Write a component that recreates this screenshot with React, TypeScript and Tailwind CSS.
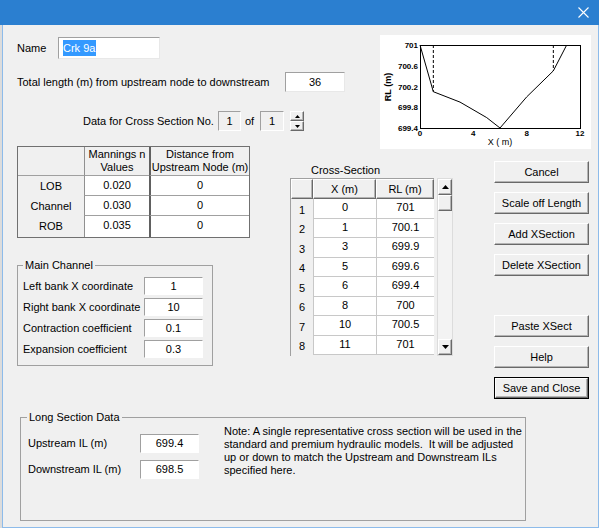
import React from 'react';

const sunken =
  'border border-t-[#a0a0a0] border-l-[#a0a0a0] border-r-[#e8e8e8] border-b-[#e8e8e8]';
const raised =
  'bg-[#f0f0f0] border border-t-white border-l-white border-r-[#696969] border-b-[#696969] shadow-[inset_-1px_-1px_0_#b4b4b4]';

const Btn = ({ label, isDefault = false }: { label: string; isDefault?: boolean }) => (
  <div className={`w-[95px] h-[22px] ${isDefault ? 'border border-black' : ''}`}>
    <div className={`w-full h-full flex items-center justify-center ${raised}`}>{label}</div>
  </div>
);

const Arrow = ({ up }: { up: boolean }) => (
  <svg width="7" height="4" viewBox="0 0 7 4">
    <path d={up ? 'M0 4 L3.5 0 L7 4 Z' : 'M0 0 L3.5 4 L7 0 Z'} fill="#000" />
  </svg>
);

const Chart = () => {
  const px = (x: number) => 420 + (x * 160) / 12;
  const py = (v: number) => 45 + ((701 - v) * 83) / 1.6;
  const pts: [number, number][] = [
    [0, 701], [1, 700.1], [3, 699.9], [5, 699.6], [6, 699.4], [8, 700], [10, 700.5], [11, 701],
  ];
  const d = pts.map(([x, v], i) => `${i ? 'L' : 'M'}${px(x).toFixed(1)} ${py(v).toFixed(1)}`).join(' ');
  const yTicks = ['701', '700.6', '700.2', '699.8', '699.4'];
  const xTicks = [0, 4, 8, 12];
  return (
    <svg width="211" height="114" viewBox="380 35 211 114" className="bg-white block">
      <rect x="420.5" y="45.5" width="160" height="83" fill="none" stroke="#000" />
      <path d={d} fill="none" stroke="#000" strokeWidth="1" />
      <line x1={px(1)} y1="45" x2={px(1)} y2={py(700.1)} stroke="#000" strokeDasharray="3 2" />
      <line x1={px(10)} y1="45" x2={px(10)} y2={py(700.5)} stroke="#000" strokeDasharray="3 2" />
      {yTicks.map((t, i) => (
        <text key={t} x="418" y={48 + i * 20.75} textAnchor="end" fontSize="8" fontWeight="bold" fontFamily="Liberation Sans, Arial, sans-serif" fill="#000">
          {t}
        </text>
      ))}
      {xTicks.map((t) => (
        <text key={t} x={px(t)} y="136" textAnchor="middle" fontSize="8" fontWeight="bold" fontFamily="Liberation Sans, Arial, sans-serif" fill="#000">
          {t}
        </text>
      ))}
      <text x="500" y="145" textAnchor="middle" fontSize="9" fontFamily="Liberation Sans, Arial, sans-serif" fill="#000">
        X ( m)
      </text>
      <text x="0" y="0" transform="translate(391 87) rotate(-90)" textAnchor="middle" fontSize="9" fontWeight="bold" fontFamily="Liberation Sans, Arial, sans-serif" fill="#000">
        RL (m)
      </text>
    </svg>
  );
};

const xs = [
  ['1', '0', '701'],
  ['2', '1', '700.1'],
  ['3', '3', '699.9'],
  ['4', '5', '699.6'],
  ['5', '6', '699.4'],
  ['6', '8', '700'],
  ['7', '10', '700.5'],
  ['8', '11', '701'],
];

export default function App() {
  return (
    <div className="w-[602px] h-[531px] bg-white overflow-hidden flex flex-col font-['Liberation_Sans',Arial,sans-serif] text-[11px] text-black leading-[13px]">
      {/* title bar */}
      <div className="h-[25px] w-[599px] bg-[#2b7fd0] flex items-center justify-end pr-[10px]">
        <svg width="11" height="11" viewBox="0 0 11 11">
          <path d="M0.5 0.5 L10.5 10.5 M10.5 0.5 L0.5 10.5" stroke="#fff" strokeWidth="1.1" />
        </svg>
      </div>

      <div className="flex h-[503px]">
        <div className="w-[2px] bg-[#dcdcdc]" />
        <div className="w-[597px] h-full bg-[#f0f0f0] border-l border-r border-b border-[#8dbbea] flex flex-col">
          {/* top row */}
          <div className="h-[121px] flex">
            <div className="pl-[14px] flex flex-col">
              <div className="mt-[12px] h-[22px] flex items-center">
                <span className="w-[41px]">Name</span>
                <div className={`w-[102px] h-[22px] bg-white ${sunken} border-r-[#d0d0d0] border-b-[#d0d0d0] flex items-center pl-[4px]`}>
                  <span className="bg-[#3399ff] text-white h-[16px] leading-[16px] pr-[1px]">Crk 9a</span>
                </div>
              </div>
              <div className="mt-[13px] h-[20px] flex items-center">
                <span className="w-[268px]">Total length (m) from upstream node to downstream</span>
                <div className={`w-[60px] h-[20px] bg-white ${sunken} flex items-center justify-center`}>36</div>
              </div>
              <div className="mt-[19px] h-[20px] flex items-center pl-[66px]">
                <span className="w-[135px]">Data for Cross Section No.</span>
                <div className={`w-[23px] h-[20px] ${sunken} border-r-white border-b-white flex items-center justify-center`}>1</div>
                <span className="w-[19px] pl-[4px]">of</span>
                <div className={`w-[24px] h-[20px] ${sunken} border-r-white border-b-white flex items-center justify-center`}>1</div>
                <div className="ml-[6px] w-[14px] h-[20px] flex flex-col">
                  <div className={`h-[10px] flex items-center justify-center ${raised}`}>
                    <svg width="5" height="3" viewBox="0 0 5 3"><path d="M0 3 L2.5 0 L5 3 Z" fill="#000" /></svg>
                  </div>
                  <div className={`h-[10px] flex items-center justify-center ${raised}`}>
                    <svg width="5" height="3" viewBox="0 0 5 3"><path d="M0 0 L2.5 3 L5 0 Z" fill="#000" /></svg>
                  </div>
                </div>
              </div>
            </div>
            <div className="ml-auto mr-[7px] mt-[10px] h-[114px]">
              <Chart />
            </div>
          </div>

          {/* middle row */}
          <div className="h-[271px] flex">
            {/* left column */}
            <div className="pl-[14px] flex flex-col">
              <div className="w-[233px] h-[92px] border border-[#707070] grid grid-cols-[66px_65px_100px] grid-rows-[29px_20px_20px_21px]">
                <div className="bg-[#f0f0f0] border-b border-[#a0a0a0]" />
                <div className="border-l border-b border-[#909090] border-b-[#a0a0a0] flex flex-col items-center justify-center text-center">
                  <span>Mannings n</span>
                  <span>Values</span>
                </div>
                <div className="border-l-2 border-b border-[#606060] border-b-[#a0a0a0] flex flex-col items-center justify-center text-center">
                  <span>Distance from</span>
                  <span>Upstream Node (m)</span>
                </div>
                {[
                  ['LOB', '0.020'],
                  ['Channel', '0.030'],
                  ['ROB', '0.035'],
                ].map(([lab, n], i) => (
                  <React.Fragment key={lab}>
                    <div className="flex items-center justify-center">{lab}</div>
                    <div className={`bg-white border-l border-[#909090] flex items-start justify-center pt-[3px] ${i < 2 ? 'border-b border-b-[#a0a0a0]' : ''}`}>{n}</div>
                    <div className={`bg-white border-l-2 border-[#606060] flex items-start justify-center pt-[3px] ${i < 2 ? 'border-b border-b-[#a0a0a0]' : ''}`}>0</div>
                  </React.Fragment>
                ))}
              </div>

              <div className="relative mt-[27px] w-[196px] h-[101px] border border-[#a0a0a0] pt-[11px] pl-[5px] flex flex-col gap-[3px]">
                <span className="absolute -top-[7px] left-[5px] px-[2px] bg-[#f0f0f0]">Main Channel</span>
                {[
                  ['Left bank X coordinate', '1'],
                  ['Right bank X coordinate', '10'],
                  ['Contraction coefficient', '0.1'],
                  ['Expansion coefficient', '0.3'],
                ].map(([lab, v]) => (
                  <div key={lab} className="h-[18px] flex items-center">
                    <span className="w-[121px]">{lab}</span>
                    <div className={`w-[59px] h-[18px] bg-white ${sunken} border-r-white border-b-white flex items-center justify-center`}>{v}</div>
                  </div>
                ))}
              </div>
            </div>

            {/* cross-section column */}
            <div className="ml-[40px] flex flex-col">
              <span className="mt-[18px] h-[14px] pl-[21px]">Cross-Section</span>
              <div className="flex">
                <div className="w-[144px] h-[178px] border-t border-l border-[#a0a0a0] flex flex-col">
                  <div className="h-[20px] flex">
                    <div className={`w-[22px] ${raised}`} />
                    <div className={`w-[63px] flex items-center justify-center ${raised}`}>X (m)</div>
                    <div className={`w-[58px] flex items-center justify-center ${raised}`}>RL (m)</div>
                  </div>
                  {xs.map(([no, x, rl], i) => (
                    <div key={no} className={`flex ${i % 2 ? 'h-[19px]' : 'h-[20px]'}`}>
                      <div className="w-[22px] flex items-center justify-center pt-[2px]">{no}</div>
                      <div className="w-[63px] bg-white border-l border-b border-[#c8c8c8] flex items-start justify-center pt-[2px]">{x}</div>
                      <div className="w-[58px] bg-white border-l border-b border-[#c8c8c8] flex items-start justify-center pt-[2px]">{rl}</div>
                    </div>
                  ))}
                </div>
                <div className="ml-[3px] w-[16px] h-[178px] flex flex-col bg-[#f3f3f3] border border-[#dcdcdc]">
                  <div className={`h-[16px] flex items-center justify-center ${raised}`}>
                    <Arrow up />
                  </div>
                  <div className={`h-[16px] ${raised}`} />
                  <div className="flex-1" />
                  <div className={`h-[16px] flex items-center justify-center ${raised}`}>
                    <Arrow up={false} />
                  </div>
                </div>
              </div>
            </div>

            {/* buttons */}
            <div className="ml-[41px] mt-[15px] flex flex-col gap-[9px]">
              <Btn label="Cancel" />
              <Btn label="Scale off Length" />
              <Btn label="Add XSection" />
              <Btn label="Delete XSection" />
              <div className="h-[21px]" />
              <Btn label="Paste XSect" />
              <Btn label="Help" />
              <Btn label="Save and Close" isDefault />
            </div>
          </div>

          {/* long section */}
          <div className="relative ml-[17px] w-[506px] h-[104px] border border-[#a0a0a0] flex pl-[7px]">
            <span className="absolute -top-[7px] left-[6px] px-[2px] bg-[#f0f0f0]">Long Section Data</span>
            <div className="pt-[16px] flex flex-col gap-[7px]">
              <div className="h-[19px] flex items-center">
                <span className="w-[112px]">Upstream IL (m)</span>
                <div className={`w-[59px] h-[19px] bg-white ${sunken} border-r-white border-b-white flex items-center justify-center`}>699.4</div>
              </div>
              <div className="h-[19px] flex items-center">
                <span className="w-[112px]">Downstream IL (m)</span>
                <div className={`w-[59px] h-[19px] bg-white ${sunken} border-r-white border-b-white flex items-center justify-center`}>698.5</div>
              </div>
            </div>
            <p className="ml-[25px] pt-[7px] whitespace-pre leading-[13px]">
              {'Note: A single representative cross section will be used in the\nstandard and premium hydraulic models.  It will be adjusted\nup or down to match the Upstream and Downstream ILs\nspecified here.'}
            </p>
          </div>
        </div>
      </div>
    </div>
  );
}
